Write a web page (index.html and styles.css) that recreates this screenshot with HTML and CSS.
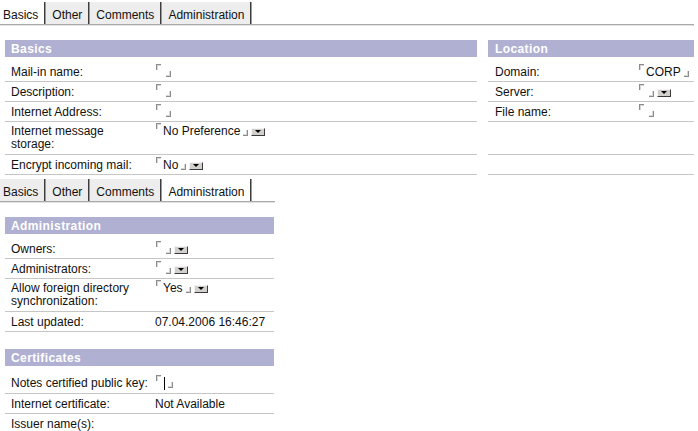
FILE: index.html
```html
<!DOCTYPE html>
<html>
<head>
<meta charset="utf-8">
<link rel="stylesheet" href="styles.css">
</head>
<body>
<div class="tabs tabs-wide">
  <span class="tab tab-first active">Basics</span>
  <span class="tab">Other</span>
  <span class="tab">Comments</span>
  <span class="tab">Administration</span>
</div>

<div class="cols">
  <div class="sec sec-basics">
    <div class="hd">Basics</div>
    <div class="rows">
      <div class="row"><div class="lab">Mail-in name:</div><div class="val"><i class="ml"></i><i class="mr"></i></div></div>
      <div class="row"><div class="lab">Description:</div><div class="val"><i class="ml"></i><i class="mr"></i></div></div>
      <div class="row"><div class="lab">Internet Address:</div><div class="val"><i class="ml"></i><i class="mr"></i></div></div>
      <div class="row row-2"><div class="lab">Internet message storage:</div><div class="val"><i class="ml"></i>No Preference<i class="mr"></i><i class="dd"></i></div></div>
      <div class="row"><div class="lab">Encrypt incoming mail:</div><div class="val"><i class="ml"></i>No<i class="mr"></i><i class="dd"></i></div></div>
    </div>
  </div>
  <div class="sec sec-loc">
    <div class="hd">Location</div>
    <div class="rows">
      <div class="row"><div class="lab">Domain:</div><div class="val"><i class="ml"></i>CORP<i class="mr"></i></div></div>
      <div class="row"><div class="lab">Server:</div><div class="val"><i class="ml"></i><i class="mr"></i><i class="dd"></i></div></div>
      <div class="row"><div class="lab">File name:</div><div class="val"><i class="ml"></i><i class="mr"></i></div></div>
      <div class="row row-tall"></div>
      <div class="row row-empty"></div>
    </div>
  </div>
</div>

<div class="tabs tabs-narrow">
  <span class="tab tab-first">Basics</span>
  <span class="tab">Other</span>
  <span class="tab">Comments</span>
  <span class="tab active">Administration</span>
</div>

<div class="sec sec-admin">
  <div class="hd">Administration</div>
  <div class="rows">
    <div class="row"><div class="lab">Owners:</div><div class="val"><i class="ml"></i><i class="mr"></i><i class="dd"></i></div></div>
    <div class="row"><div class="lab">Administrators:</div><div class="val"><i class="ml"></i><i class="mr"></i><i class="dd"></i></div></div>
    <div class="row row-2"><div class="lab">Allow foreign directory synchronization:</div><div class="val"><i class="ml"></i>Yes<i class="mr"></i><i class="dd"></i></div></div>
    <div class="row"><div class="lab">Last updated:</div><div class="val">07.04.2006 16:46:27</div></div>
  </div>
</div>

<div class="sec sec-admin sec-cert">
  <div class="hd">Certificates</div>
  <div class="rows">
    <div class="row row-cert"><div class="lab">Notes certified public key:</div><div class="val"><i class="ml"></i><i class="cur"></i><i class="mr"></i></div></div>
    <div class="row"><div class="lab">Internet certificate:</div><div class="val">Not Available</div></div>
    <div class="row row-last"><div class="lab">Issuer name(s):</div><div class="val"></div></div>
  </div>
</div>
</body>
</html>
```

FILE: styles.css
```css
html, body {
  margin: 0;
  padding: 0;
  background: #ffffff;
}
body {
  font-family: "Liberation Sans", Arial, sans-serif;
  font-size: 12px;
  color: #111;
  overflow: hidden;
}
i { font-style: normal; }

/* tab strip */
.tabs {
  display: flex;
  align-items: flex-end;
  height: 24px;
  border-bottom: 1px solid #a9a9a9;
  box-shadow: 0 1px 0 #e2e2e2;
}
.tabs-wide { width: 694px; }
.tabs-narrow { width: 275px; margin-top: 2px; }
.tab {
  display: block;
  height: 22px;
  box-sizing: border-box;
  padding: 6px 6px 2px 6px;
  line-height: 14px;
  background: #ededed;
  border-right: 1px solid #3c3c3c;
  box-shadow: 1px 0 0 #9a9a9a;
  margin-right: 1px;
  color: #111;
}
.tab-first { padding-left: 3px; }
.tab.active { background: #ffffff; }

/* columns */
.cols {
  display: flex;
  gap: 11px;
  padding: 15px 0 0 5px;
}
.sec-basics { width: 472px; }
.sec-loc { width: 206px; }
.sec-admin { width: 269px; margin: 15px 0 0 5px; }
.sec-cert { margin-top: 17px; }

.hd {
  height: 17px;
  box-sizing: border-box;
  padding-top: 1px;
  line-height: 16px;
  background: #b0b0d2;
  color: #ffffff;
  font-weight: bold;
  letter-spacing: 0.4px;
  padding-left: 6px;
}
.sec-loc .hd { padding-left: 7px; }

.rows { padding-top: 5px; }
.row {
  display: flex;
  padding: 4px 0 2px;
  line-height: 13px;
  border-bottom: 1px solid #c6c6c6;
}
.row-2 { padding: 3px 0; }
.row-tall { height: 26px; padding: 3px 0; }
.row-empty { height: 13px; }
.row-cert { padding: 6px 0 3px; }
.row-last { border-bottom: none; }

.lab {
  flex: none;
  width: 150px;
  box-sizing: border-box;
  padding: 0 6px 0 6px;
}
.sec-loc .lab { padding-left: 7px; }
.val {
  flex: 1;
  white-space: nowrap;
}

/* field delimiters */
.ml {
  display: inline-block;
  width: 4px;
  height: 5px;
  border-left: 1px solid #8c8c8c;
  border-top: 1px solid #8c8c8c;
  box-shadow: inset 1px 1px 0 #d6d6d6;
  vertical-align: top;
  position: relative;
  top: -2px;
  margin: 0 2px 0 1px;
}
.mr {
  display: inline-block;
  width: 4px;
  height: 5px;
  border-right: 1px solid #8c8c8c;
  border-bottom: 1px solid #8c8c8c;
  box-shadow: inset -1px -1px 0 #d6d6d6;
  vertical-align: baseline;
  position: relative;
  top: 1px;
  margin: 0 3px 0 3px;
}
.dd {
  display: inline-block;
  width: 12px;
  height: 6px;
  background: #d2d0cc;
  border: 1px solid;
  border-color: #f4f4f4 #3a3a3a #3a3a3a #f4f4f4;
  vertical-align: baseline;
  position: relative;
  top: 1px;
}
.dd::after {
  content: "";
  position: absolute;
  left: 3px;
  top: 1px;
  border-left: 3px solid transparent;
  border-right: 3px solid transparent;
  border-top: 3px solid #000;
}
.cur {
  display: inline-block;
  width: 1px;
  height: 13px;
  background: #000;
  vertical-align: -3px;
  margin-left: 1px;
}
```
